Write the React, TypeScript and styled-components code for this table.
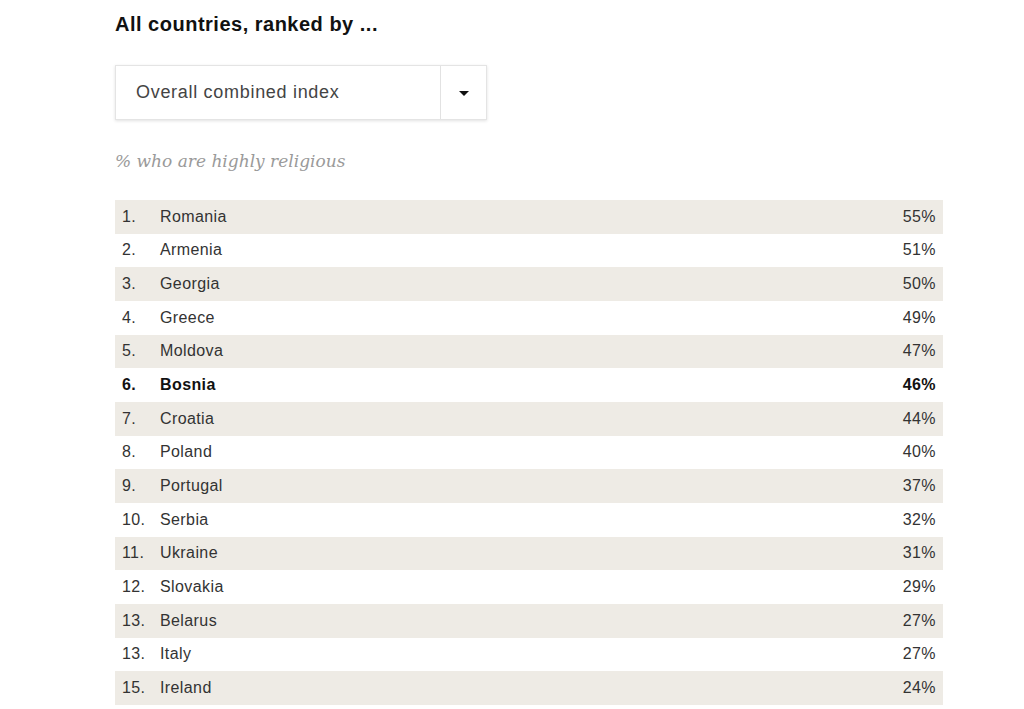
import React from "react";
import styled, { createGlobalStyle } from "styled-components";

const Global = createGlobalStyle`
  html, body { margin: 0; padding: 0; background: #ffffff; }
  body { font-family: "Liberation Sans", Arial, sans-serif; }
`;

const Page = styled.div`
  width: 1024px;
  height: 709px;
  overflow: hidden;
  padding: 11px 0 0 115px;
  box-sizing: border-box;
`;

const Title = styled.h2`
  margin: 0;
  font-size: 20px;
  line-height: 26px;
  font-weight: 700;
  letter-spacing: 0.5px;
  color: #111;
`;

const Select = styled.div`
  margin-top: 28px;
  width: 372px;
  height: 55px;
  display: flex;
  box-sizing: border-box;
  border: 1px solid #e4e4e4;
  box-shadow: 0 1px 3px rgba(0, 0, 0, 0.12);
  background: #fff;
`;

const SelectLabel = styled.div`
  flex: 1;
  display: flex;
  align-items: center;
  padding-left: 20px;
  font-size: 18px;
  letter-spacing: 0.7px;
  color: #444;
  border-right: 1px solid #e2e2e2;
`;

const SelectButton = styled.div`
  width: 45px;
  display: flex;
  align-items: center;
  justify-content: center;
`;

const Caret = styled.span`
  width: 0;
  height: 0;
  border-left: 5px solid transparent;
  border-right: 5px solid transparent;
  border-top: 5px solid #111;
  margin-top: 2px;
`;

const Subtitle = styled.p`
  margin: 29px 0 0;
  font-family: "DejaVu Serif", Georgia, serif;
  font-style: italic;
  font-size: 17px;
  line-height: 24px;
  color: #9a9a9a;
`;

const Table = styled.div`
  margin-top: 27px;
  width: 828px;
  display: grid;
  grid-auto-rows: 33.67px;
`;

const Row = styled.div<{ $shade: boolean; $bold: boolean }>`
  display: grid;
  grid-template-columns: 38px 1fr auto;
  align-items: center;
  padding: 0 7px 0 7px;
  background: ${(p) => (p.$shade ? "#eeebe5" : "#ffffff")};
  font-size: 16px;
  color: ${(p) => (p.$bold ? "#111" : "#333")};
  font-weight: ${(p) => (p.$bold ? 700 : 400)};
  letter-spacing: 0.4px;
`;

const Cell = styled.span<{ $right?: boolean }>`
  text-align: ${(p) => (p.$right ? "right" : "left")};
`;

const data: [string, string, string][] = [
  ["1.", "Romania", "55%"],
  ["2.", "Armenia", "51%"],
  ["3.", "Georgia", "50%"],
  ["4.", "Greece", "49%"],
  ["5.", "Moldova", "47%"],
  ["6.", "Bosnia", "46%"],
  ["7.", "Croatia", "44%"],
  ["8.", "Poland", "40%"],
  ["9.", "Portugal", "37%"],
  ["10.", "Serbia", "32%"],
  ["11.", "Ukraine", "31%"],
  ["12.", "Slovakia", "29%"],
  ["13.", "Belarus", "27%"],
  ["13.", "Italy", "27%"],
  ["15.", "Ireland", "24%"],
];

export default function App() {
  return (
    <Page>
      <Global />
      <Title>All countries, ranked by ...</Title>
      <Select>
        <SelectLabel>Overall combined index</SelectLabel>
        <SelectButton>
          <Caret />
        </SelectButton>
      </Select>
      <Subtitle>% who are highly religious</Subtitle>
      <Table>
        {data.map(([rank, name, pct], i) => (
          <Row key={i} $shade={i % 2 === 0} $bold={name === "Bosnia"}>
            <Cell>{rank}</Cell>
            <Cell>{name}</Cell>
            <Cell $right>{pct}</Cell>
          </Row>
        ))}
      </Table>
    </Page>
  );
}
